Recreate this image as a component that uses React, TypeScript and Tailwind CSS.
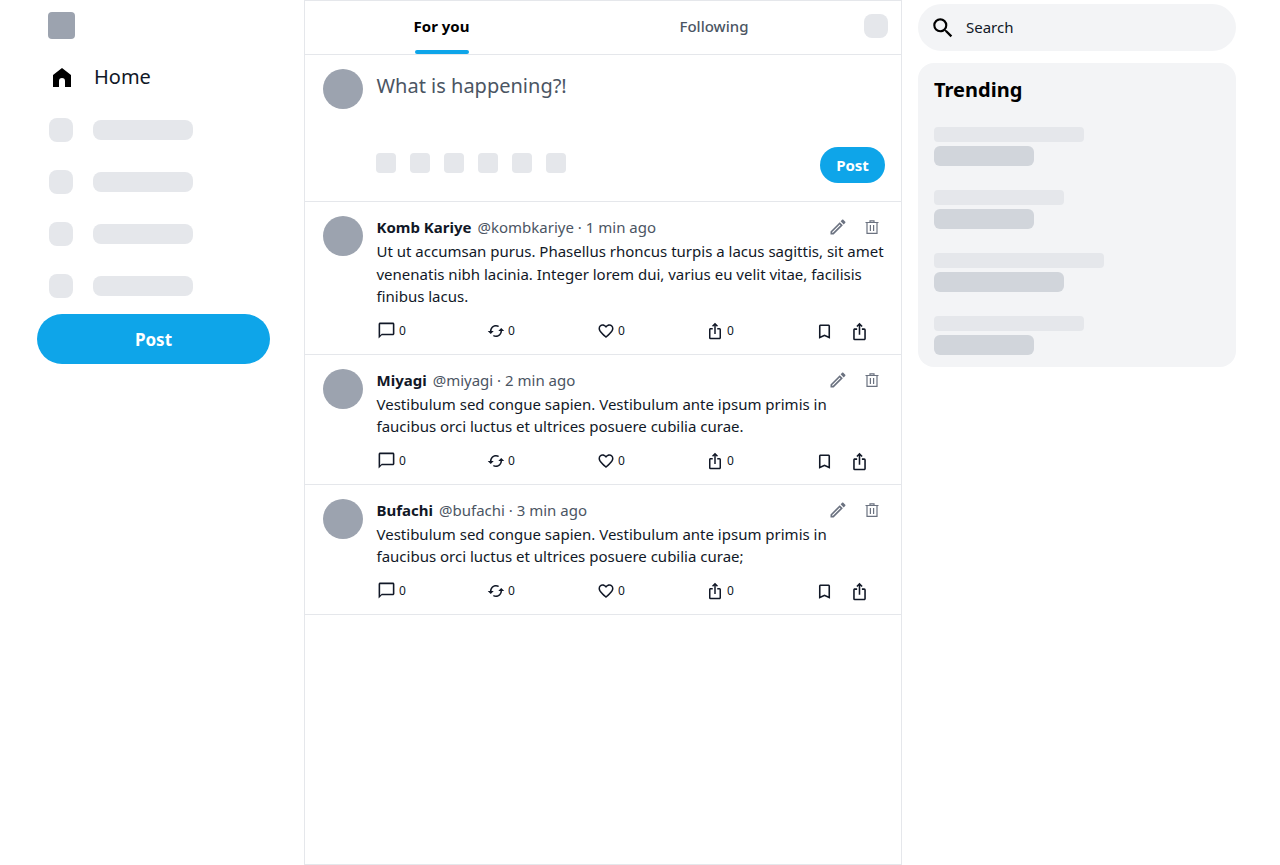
import { MdBookmarkBorder, MdCached, MdChatBubbleOutline, MdFavoriteBorder, MdIosShare, MdOutlineEdit, MdSearch } from "react-icons/md"

const posts = [
  {
    name: "Komb Kariye",
    handle: "@kombkariye",
    time: "1 min ago",
    body: "Ut ut accumsan purus. Phasellus rhoncus turpis a lacus sagittis, sit amet venenatis nibh lacinia. Integer lorem dui, varius eu velit vitae, facilisis finibus lacus.",
  },
  {
    name: "Miyagi",
    handle: "@miyagi",
    time: "2 min ago",
    body: "Vestibulum sed congue sapien. Vestibulum ante ipsum primis in faucibus orci luctus et ultrices posuere cubilia curae.",
  },
  {
    name: "Bufachi",
    handle: "@bufachi",
    time: "3 min ago",
    body: "Vestibulum sed congue sapien. Vestibulum ante ipsum primis in faucibus orci luctus et ultrices posuere cubilia curae;",
  },
]

const trends = [
  { top: "w-[150px]", bottom: "w-[100px]" },
  { top: "w-[130px]", bottom: "w-[100px]" },
  { top: "w-[170px]", bottom: "w-[130px]" },
  { top: "w-[150px]", bottom: "w-[100px]" },
]

function Sidebar() {
  return (
    <aside className="w-[304px] shrink-0 pl-[37px] pr-[34px]">
      <div className="pt-3 pl-[11px]">
        <div className="h-[27px] w-[27px] rounded bg-[#9ca3af]" />
      </div>
      <div className="mt-[13px] flex h-[50px] items-center gap-[23px] pl-[16px]">
        <svg viewBox="0 0 18 19" className="h-[19px] w-[18px] fill-black">
          <path d="M9 0 L18 7 V19 H12 V13 a3 3 0 0 0 -6 0 V19 H0 V7 Z" />
        </svg>
        <span className="text-xl text-[#111827]">Home</span>
      </div>
      <div className="mt-[16px] flex flex-col gap-7">
        {[0, 1, 2, 3].map((i) => (
          <div key={i} className="flex items-center gap-5 pl-3">
            <div className="h-6 w-6 rounded-lg bg-[#e5e7eb]" />
            <div className="h-5 w-[100px] rounded-lg bg-[#e5e7eb]" />
          </div>
        ))}
      </div>
      <button className="mt-4 h-[50px] w-full rounded-full bg-[#0ea5e9] pt-px text-[17px] font-bold text-white">Post</button>
    </aside>
  )
}

function Composer() {
  return (
    <div className="flex h-[147px] gap-[13.5px] border-b border-[#e5e7eb] pl-[18px] pr-4 pt-[14px]">
      <div className="h-10 w-10 shrink-0 rounded-full bg-[#9ca3af]" />
      <div className="flex flex-1 flex-col">
        <div className="text-xl leading-[33px] text-[#4b5563]">What is happening?!</div>
        <div className="mt-[45px] flex items-start justify-between">
          <div className="-ml-[0.5px] mt-[6px] flex gap-[14px]">
            {[0, 1, 2, 3, 4, 5].map((i) => (
              <div key={i} className="h-5 w-5 rounded bg-[#e5e7eb]" />
            ))}
          </div>
          <button className="h-9 w-[65px] rounded-full bg-[#0ea5e9] text-[15px] font-bold text-white">Post</button>
        </div>
      </div>
    </div>
  )
}

function Stat({ icon, width }: { icon: React.ReactNode; width: string }) {
  return (
    <div className={`flex items-center gap-[3.5px] text-xs text-[#111827] ${width}`}>
      {icon}
      <span>0</span>
    </div>
  )
}

function TrashIcon() {
  return (
    <svg viewBox="0 0 14 14" fill="none" stroke="currentColor" strokeWidth="1.2" className="h-[14px] w-[14px]">
      <path d="M0.5 2.5 H13.5 M5 2.5 V0.8 H9 V2.5 M2 2.5 V13.4 H12 V2.5 M5.4 5 V11 M8.6 5 V11" />
    </svg>
  )
}

function PostRow({ post }: { post: (typeof posts)[number] }) {
  return (
    <div className="flex gap-[13.5px] border-b border-[#e5e7eb] pl-[18px] pr-4 pt-[14px] pb-[11px]">
      <div className="h-10 w-10 shrink-0 rounded-full bg-[#9ca3af]" />
      <div className="min-w-0 flex-1">
        <div className="flex h-6 items-start justify-between">
          <div className="flex items-center gap-[6px] text-[15px] text-[#4b5563]">
            <span className="font-bold text-[#111827]">{post.name}</span>
            <span>{post.handle} · {post.time}</span>
          </div>
          <div className="flex items-center gap-[17px] pr-[6px] pt-px text-[#6b7280]">
            <MdOutlineEdit className="h-5 w-5" />
            <TrashIcon />
          </div>
        </div>
        <p className="text-[15px] leading-[22.5px] text-[#111827]">{post.body}</p>
        <div className="mt-[11px] flex h-6 items-center">
          <Stat width="w-[110px]" icon={<MdChatBubbleOutline className="h-[19px] w-[19px]" />} />
          <Stat width="w-[110px]" icon={<MdCached className="h-[18px] w-[18px]" />} />
          <Stat width="w-[109px]" icon={<MdFavoriteBorder className="h-[18px] w-[18px]" />} />
          <Stat width="w-[109px]" icon={<MdIosShare className="h-[18px] w-[18px]" />} />
          <div className="flex items-center gap-[16px] pt-[2px] text-[#111827]">
            <MdBookmarkBorder className="h-[19px] w-[19px]" />
            <MdIosShare className="h-[19px] w-[19px]" />
          </div>
        </div>
      </div>
    </div>
  )
}

function Feed() {
  return (
    <main className="min-h-[865px] w-[598px] shrink-0 border border-[#e5e7eb]">
      <div className="flex h-[54px] border-b border-[#e5e7eb]">
        <div className="flex w-[273px] justify-center">
          <div className="flex h-[53px] flex-col items-center justify-between">
            <span className="pt-[14px] text-[15px] font-bold text-black">For you</span>
            <div className="h-1 w-[54px] rounded-sm bg-[#0ea5e9]" />
          </div>
        </div>
        <div className="w-[272px] pt-[14px] text-center text-[15px] font-medium text-[#4b5563]">Following</div>
        <div className="ml-[14px] mt-[13px] h-6 w-6 rounded-lg bg-[#e5e7eb]" />
      </div>
      <Composer />
      {posts.map((post) => (
        <PostRow key={post.handle} post={post} />
      ))}
    </main>
  )
}

function RightRail() {
  return (
    <aside className="ml-4 w-[318px] shrink-0 pt-1">
      <div className="flex h-[47px] items-center gap-[10px] rounded-full bg-[#f3f4f6] pl-[12px] text-[15px] text-[#111827]">
        <MdSearch className="h-[26px] w-[26px] text-black" />
        <span className="-mt-px">Search</span>
      </div>
      <div className="mt-3 h-[304px] rounded-2xl bg-[#f3f4f6] px-4 pt-[13px]">
        <h2 className="text-xl font-bold text-black">Trending</h2>
        <div className="mt-[23px] flex flex-col gap-6">
          {trends.map((t, i) => (
            <div key={i} className="flex flex-col gap-1">
              <div className={`h-[15px] rounded bg-[#e5e7eb] ${t.top}`} />
              <div className={`h-5 rounded-md bg-[#d1d5db] ${t.bottom}`} />
            </div>
          ))}
        </div>
      </div>
    </aside>
  )
}

export default function App() {
  return (
    <div className="flex min-h-[865px] bg-white font-['Noto_Sans',sans-serif]">
      <Sidebar />
      <Feed />
      <RightRail />
    </div>
  )
}
